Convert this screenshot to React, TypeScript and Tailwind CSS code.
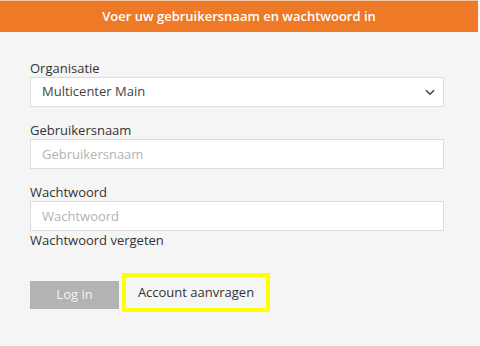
import React from "react";

const App = () => {
  return (
    <div className="w-[480px] h-[346px] bg-[#f5f5f5] font-['Open_Sans',sans-serif] text-[#333]">
      {/* Header */}
      <div className="w-[478px] h-[32px] bg-[#ee7a27] flex items-center justify-center text-white text-[13px] font-semibold border-t border-[#f3c9a8]">
        Voer uw gebruikersnaam en wachtwoord in
      </div>

      <div className="pl-[30px] pt-[27px] w-[444px] box-content">
        {/* Organisatie */}
        <label className="block text-[13px] leading-[18px]">Organisatie</label>
        <div className="relative h-[30px] w-[414px] bg-white border border-[#dcdcdc] flex items-center pl-[11px] text-[13px] text-[#444]">
          Multicenter Main
          <svg
            className="absolute right-[8px] top-[11px]"
            width="10"
            height="7"
            viewBox="0 0 10 7"
            fill="none"
            stroke="#444"
            strokeWidth="1.6"
          >
            <path d="M1 1.2 5 5.2 9 1.2" />
          </svg>
        </div>

        {/* Gebruikersnaam */}
        <label className="block mt-[14px] text-[13px] leading-[18px]">Gebruikersnaam</label>
        <input
          className="block h-[30px] w-[414px] bg-white border border-[#dcdcdc] pl-[11px] text-[13px] outline-none placeholder:text-[#b3b3b3]"
          placeholder="Gebruikersnaam"
        />

        {/* Wachtwoord */}
        <label className="block mt-[14px] text-[13px] leading-[18px]">Wachtwoord</label>
        <input
          type="password"
          className="block h-[30px] w-[414px] bg-white border border-[#dcdcdc] pl-[11px] text-[13px] outline-none placeholder:text-[#b3b3b3]"
          placeholder="Wachtwoord"
        />
        <div className="text-[13px] leading-[18px]">Wachtwoord vergeten</div>

        {/* Buttons */}
        <div className="flex items-start gap-[3px] mt-[24px]">
          <button className="mt-[8px] h-[28px] w-[89px] bg-[#b3b3b3] text-[#f4f4f4] text-[13px]">
            Log in
          </button>
          <div className="h-[39px] w-[148px] border-[4px] border-[#ffff00] flex items-center justify-center text-[13px] text-[#333]">
            Account aanvragen
          </div>
        </div>
      </div>
    </div>
  );
};

export default App;
